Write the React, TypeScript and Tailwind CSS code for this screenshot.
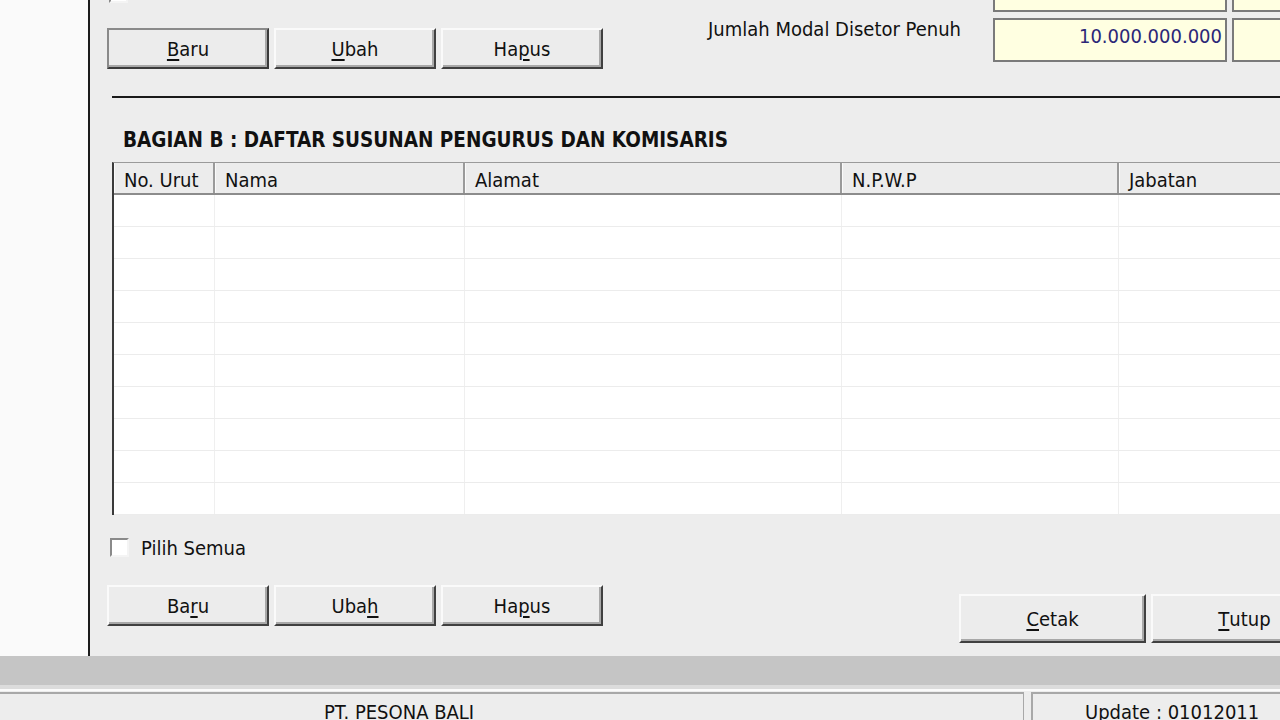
import React from 'react'

const Btn = ({ children, focus = false, w = 'w-[162px]', h = 'h-[41px]' }: { children: React.ReactNode; focus?: boolean; w?: string; h?: string }) => (
  <div
    className={`${w} ${h} flex items-center justify-center bg-[#ececec] text-[20px] text-[#111] border-2 ${
      focus
        ? 'border-t-[#8a8a8a] border-l-[#8a8a8a] border-b-[#3a3a3a] border-r-[#3a3a3a]'
        : 'border-t-[#fafafa] border-l-[#fafafa] border-b-[#404040] border-r-[#404040]'
    } shadow-[inset_-2px_-2px_0_#a8a8a8]`}
  >
    {children}
  </div>
)

const U = ({ children }: { children: React.ReactNode }) => <span className="underline underline-offset-[3px]">{children}</span>

const columns = [
  { name: 'No. Urut', w: 'w-[101px]' },
  { name: 'Nama', w: 'w-[250px]' },
  { name: 'Alamat', w: 'w-[377px]' },
  { name: 'N.P.W.P', w: 'w-[277px]' },
  { name: 'Jabatan', w: 'w-[220px]' },
]

export default function App() {
  const rows = Array.from({ length: 10 })

  return (
    <div className="w-[1280px] h-[720px] overflow-hidden flex flex-col bg-[#ededed] font-['DejaVu_Sans_Condensed','DejaVu_Sans',sans-serif] text-[#111]">
      {/* window area */}
      <div className="flex h-[656px] shrink-0">
        <div className="w-[88px] shrink-0 bg-[#fafafa]" />
        <div className="w-[2px] shrink-0 bg-[#1c1c1c]" />
        <div className="flex-1 min-w-0 bg-[#ededed] overflow-hidden flex flex-col pl-[17px]">
          {/* clipped checkbox at top */}
          <div className="h-0 relative">
            <div className="absolute left-[2px] top-[-16px] w-[19px] h-[19px] bg-white border-2 border-t-[#8a8a8a] border-l-[#8a8a8a] border-b-[#f4f4f4] border-r-[#f4f4f4]" />
          </div>

          {/* top row */}
          <div className="flex items-start w-[1300px]">
            <div className="flex gap-[5px] mt-[28px]">
              <Btn focus><U>B</U>aru</Btn>
              <Btn><U>U</U>bah</Btn>
              <Btn>Ha<U>p</U>us</Btn>
            </div>
            <div className="flex flex-col gap-[6px] mt-[-32px] ml-[96px]">
              <div className="flex items-start">
                <div className="w-[264px]" />
                <div className="ml-[30px] w-[234px] h-[44px] bg-[#ffffe1] border-2 border-[#7a7a7a]" />
                <div className="ml-[5px] w-[100px] h-[44px] bg-[#ffffe1] border-2 border-[#7a7a7a]" />
              </div>
              <div className="flex items-start">
                <div className="w-[262px] text-right text-[20px] leading-[22px]">Jumlah Modal Disetor Penuh</div>
                <div className="ml-[32px] w-[234px] h-[44px] bg-[#ffffe1] border-2 border-[#7a7a7a] flex items-start justify-end pt-[4px] pr-[3px] text-[20px] leading-[24px] text-[#2c2878]">
                  10.000.000.000
                </div>
                <div className="ml-[5px] w-[100px] h-[44px] bg-[#ffffe1] border-2 border-[#7a7a7a]" />
              </div>
            </div>
          </div>

          <div className="ml-[5px] mt-[27px] h-[2px] bg-[#1a1a1a]" />

          <div className="ml-[16px] mt-[30px] h-[24px] leading-[24px] text-[20.5px] font-bold">
            BAGIAN B : DAFTAR SUSUNAN PENGURUS DAN KOMISARIS
          </div>

          {/* table */}
          <div className="ml-[5px] mt-[10px] w-[1300px] border-t border-[#9a9a9a] border-l-2 border-l-[#3a3a3a]">
            <div className="flex h-[32px] bg-[#ececec] border-b-2 border-[#8c8c8c]">
              {columns.map((c) => (
                <div
                  key={c.name}
                  className={`${c.w} shrink-0 flex items-center pt-[3px] pl-[9px] text-[20px] border-r-2 border-r-[#9a9a9a] border-l border-l-[#fafafa]`}
                >
                  {c.name}
                </div>
              ))}
            </div>
            <div className="bg-white">
              {rows.map((_, i) => (
                <div key={i} className="flex h-[32px] border-b border-[#ececec]">
                  {columns.map((c) => (
                    <div key={c.name} className={`${c.w} shrink-0 border-r border-[#efefef]`} />
                  ))}
                </div>
              ))}
            </div>
          </div>

          {/* pilih semua */}
          <div className="flex items-center mt-[23px] ml-[3px] h-[19px]">
            <div className="w-[19px] h-[19px] bg-white border-2 border-t-[#8a8a8a] border-l-[#8a8a8a] border-b-[#f4f4f4] border-r-[#f4f4f4]" />
            <span className="ml-[12px] text-[20px]">Pilih Semua</span>
          </div>

          {/* bottom buttons */}
          <div className="flex items-start mt-[28px] w-[1300px]">
            <div className="flex gap-[5px]">
              <Btn>Ba<U>r</U>u</Btn>
              <Btn>Uba<U>h</U></Btn>
              <Btn>Ha<U>p</U>us</Btn>
            </div>
            <div className="flex gap-[5px] mt-[9px] ml-[356px]">
              <Btn w="w-[187px]" h="h-[49px]"><U>C</U>etak</Btn>
              <Btn w="w-[187px]" h="h-[49px]"><U>T</U>utup</Btn>
            </div>
          </div>
        </div>
      </div>

      {/* gray band */}
      <div className="h-[29px] shrink-0 bg-[#c5c5c5]" />
      <div className="h-[4px] shrink-0 bg-[#dcdcdc]" />
      <div className="h-[2px] shrink-0 bg-[#fbfbfb]" />

      {/* status bar */}
      <div className="h-[29px] shrink-0 overflow-hidden flex gap-[7px] bg-[#ededed] pt-[1px]">
        <div className="w-[1024px] h-[40px] border-t-2 border-r border-[#a8a8a8] pl-[324px] pt-[7px] text-[20px] leading-[22px]">
          PT. PESONA BALI
        </div>
        <div className="flex-1 h-[40px] border-t-2 border-l-2 border-[#a8a8a8] pl-[52px] pt-[7px] text-[20px] leading-[22px]">
          Update : 01012011
        </div>
      </div>
    </div>
  )
}
